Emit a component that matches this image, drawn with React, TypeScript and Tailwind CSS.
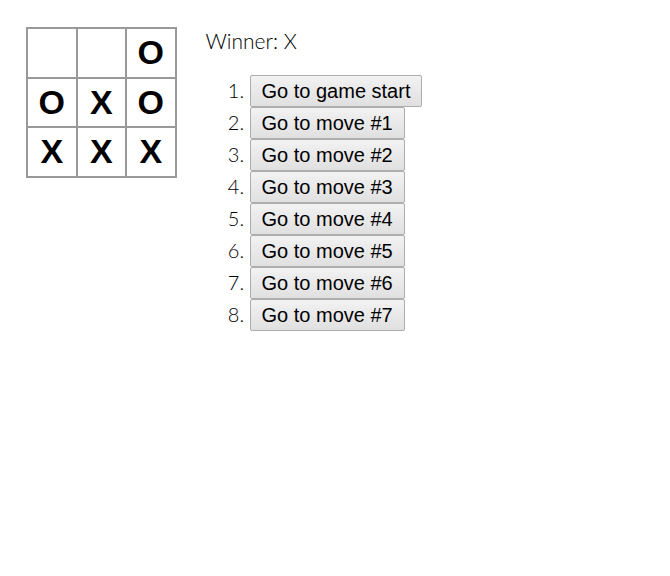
import React from "react";

const squares = ["", "", "O", "O", "X", "O", "X", "X", "X"];
const moves = [
  "Go to game start",
  "Go to move #1",
  "Go to move #2",
  "Go to move #3",
  "Go to move #4",
  "Go to move #5",
  "Go to move #6",
  "Go to move #7",
];

function Square({ value }: { value: string }) {
  return (
    <button className="w-[51.5px] h-[51.5px] -mr-[2px] -mt-[2px] border-2 border-[#999] bg-white p-0 text-center text-[34px] font-bold leading-[47px] text-black [font-family:'Liberation_Sans',Arial,sans-serif]">
      {value}
    </button>
  );
}

export default function App() {
  return (
    <div className="min-h-[576px] bg-white pl-[26px] pt-[29px] text-[21px] text-black [font-family:Lato,'Open_Sans',sans-serif]">
      <div className="flex flex-row">
        {/* Board */}
        <div className="flex flex-col">
          {[0, 1, 2].map((r) => (
            <div key={r} className="flex flex-row">
              {[0, 1, 2].map((c) => (
                <Square key={c} value={squares[r * 3 + c]} />
              ))}
            </div>
          ))}
        </div>

        {/* Info */}
        <div className="ml-[31px]">
          <div className="leading-[24px] font-light">Winner: X</div>
          <ol className="mt-[22px] list-decimal pl-[44px] font-light">
            {moves.map((m, i) => (
              <li key={i} className="h-[32px] text-[20px]">
                <button className="h-[32px] rounded-[2px] border border-[#adadad] bg-gradient-to-b from-[#f2f2f2] to-[#e0e0e0] px-[11px] align-top text-[20px] font-normal leading-[28px] text-black [font-family:'Liberation_Sans',Arial,sans-serif]">
                  {m}
                </button>
              </li>
            ))}
          </ol>
        </div>
      </div>
    </div>
  );
}
